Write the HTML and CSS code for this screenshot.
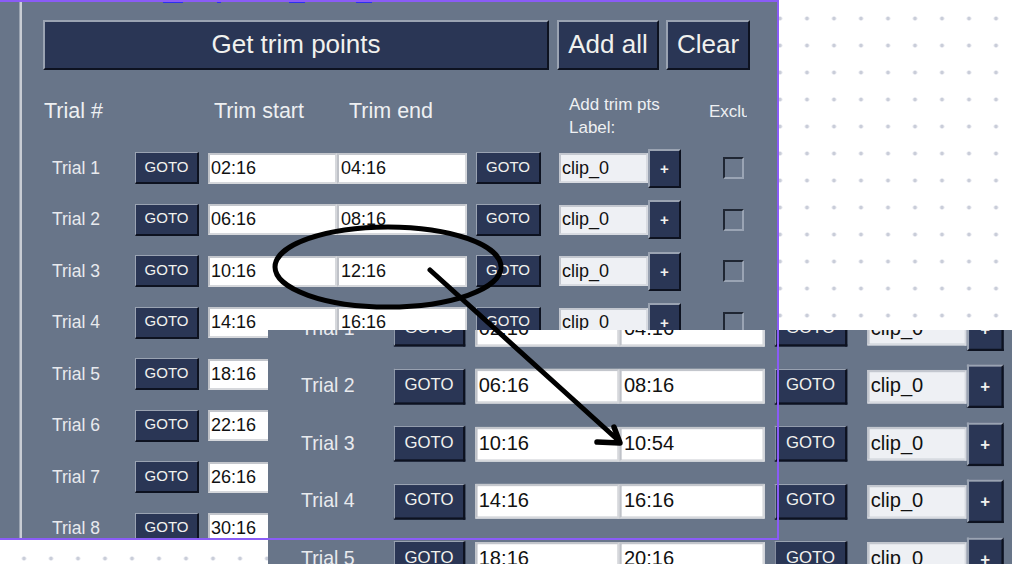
FILE: index.html
```html
<!DOCTYPE html>
<html>
<head>
<meta charset="utf-8">
<link rel="stylesheet" href="styles.css">
</head>
<body>
<div class="stage">
  <div class="panel">
    <div class="strip"></div>
    <div class="vline"></div>
    <div class="content">
      <div class="links"><i class="l1"></i><i class="l2"></i><i class="l3"></i><i class="l4"></i></div>
      <div class="toolbar">
        <span class="btn big main">Get trim points</span>
        <span class="btn big addall">Add all</span>
        <span class="btn big clear">Clear</span>
      </div>
      <div class="head">
        <span class="h-big">Trial #</span>
        <span class="h-big">Trim start</span>
        <span class="h-big">Trim end</span>
        <span class="h-small">Add trim pts<br>Label:</span>
        <span class="h-small excl">Exclude</span>
      </div>
      <div class="row"><span class="trial">Trial 1</span><span class="btn goto">GOTO</span><span class="field start">02:16</span><span class="field end">04:16</span><span class="btn goto goto2">GOTO</span><span class="field clip">clip_0</span><span class="btn plus">+</span><span class="check"></span></div>
      <div class="row"><span class="trial">Trial 2</span><span class="btn goto">GOTO</span><span class="field start">06:16</span><span class="field end">08:16</span><span class="btn goto goto2">GOTO</span><span class="field clip">clip_0</span><span class="btn plus">+</span><span class="check"></span></div>
      <div class="row"><span class="trial">Trial 3</span><span class="btn goto">GOTO</span><span class="field start">10:16</span><span class="field end">12:16</span><span class="btn goto goto2">GOTO</span><span class="field clip">clip_0</span><span class="btn plus">+</span><span class="check"></span></div>
      <div class="row"><span class="trial">Trial 4</span><span class="btn goto">GOTO</span><span class="field start">14:16</span><span class="field end">16:16</span><span class="btn goto goto2">GOTO</span><span class="field clip">clip_0</span><span class="btn plus">+</span><span class="check"></span></div>
      <div class="row"><span class="trial">Trial 5</span><span class="btn goto">GOTO</span><span class="field start">18:16</span><span class="field end">20:16</span><span class="btn goto goto2">GOTO</span><span class="field clip">clip_0</span><span class="btn plus">+</span><span class="check"></span></div>
      <div class="row"><span class="trial">Trial 6</span><span class="btn goto">GOTO</span><span class="field start">22:16</span><span class="field end">24:16</span><span class="btn goto goto2">GOTO</span><span class="field clip">clip_0</span><span class="btn plus">+</span><span class="check"></span></div>
      <div class="row"><span class="trial">Trial 7</span><span class="btn goto">GOTO</span><span class="field start">26:16</span><span class="field end">28:16</span><span class="btn goto goto2">GOTO</span><span class="field clip">clip_0</span><span class="btn plus">+</span><span class="check"></span></div>
      <div class="row"><span class="trial">Trial 8</span><span class="btn goto">GOTO</span><span class="field start">30:16</span><span class="field end">32:16</span><span class="btn goto goto2">GOTO</span><span class="field clip">clip_0</span><span class="btn plus">+</span><span class="check"></span></div>
    </div>
  </div>

  <div class="zoom">
    <div class="panel scaled">
      <div class="strip"></div>
      <div class="vline"></div>
      <div class="content">
        <div class="links"></div>
        <div class="toolbar"></div>
        <div class="head"></div>
        <div class="row"><span class="trial">Trial 1</span><span class="btn goto">GOTO</span><span class="field start">02:16</span><span class="field end">04:16</span><span class="btn goto goto2">GOTO</span><span class="field clip">clip_0</span><span class="btn plus">+</span><span class="check"></span></div>
        <div class="row"><span class="trial">Trial 2</span><span class="btn goto">GOTO</span><span class="field start">06:16</span><span class="field end">08:16</span><span class="btn goto goto2">GOTO</span><span class="field clip">clip_0</span><span class="btn plus">+</span><span class="check"></span></div>
        <div class="row"><span class="trial">Trial 3</span><span class="btn goto">GOTO</span><span class="field start">10:16</span><span class="field end">10:54</span><span class="btn goto goto2">GOTO</span><span class="field clip">clip_0</span><span class="btn plus">+</span><span class="check"></span></div>
        <div class="row"><span class="trial">Trial 4</span><span class="btn goto">GOTO</span><span class="field start">14:16</span><span class="field end">16:16</span><span class="btn goto goto2">GOTO</span><span class="field clip">clip_0</span><span class="btn plus">+</span><span class="check"></span></div>
        <div class="row"><span class="trial">Trial 5</span><span class="btn goto">GOTO</span><span class="field start">18:16</span><span class="field end">20:16</span><span class="btn goto goto2">GOTO</span><span class="field clip">clip_0</span><span class="btn plus">+</span><span class="check"></span></div>
      </div>
    </div>
  </div>

  <div class="frame"></div>

  <svg class="annot" width="1012" height="564" viewBox="0 0 1012 564">
    <ellipse cx="388" cy="267" rx="113" ry="40" fill="none" stroke="#000" stroke-width="5"/>
    <path d="M430 270 L619 441" fill="none" stroke="#000" stroke-width="5" stroke-linecap="round"/>
    <path d="M597 442 L620 443 L614 427" fill="none" stroke="#000" stroke-width="5.5" stroke-linecap="round" stroke-linejoin="round"/>
  </svg>
</div>
</body>
</html>
```

FILE: styles.css
```css
* { box-sizing: border-box; }

html, body {
  margin: 0;
  padding: 0;
}

body {
  width: 1012px;
  height: 564px;
  overflow: hidden;
  background-color: #ffffff;
  background-image: radial-gradient(circle, #c9cdd9 0, #c9cdd9 1.6px, rgba(255,255,255,0) 2.4px);
  background-size: 27px 27px;
  background-position: 10.5px 5px;
  font-family: "Liberation Sans", Arial, sans-serif;
}

.stage {
  position: relative;
  width: 1012px;
  height: 564px;
}

.panel {
  width: 777px;
  height: 538px;
  background: #687589;
  display: flex;
  overflow: hidden;
}

.strip {
  width: 19px;
  flex: none;
}

.vline {
  width: 3px;
  flex: none;
  background: #c9cdd4;
  border-left: 1px solid #9aa3b1;
}

.content {
  flex: 1;
  display: flex;
  flex-direction: column;
}

.content > * {
  flex: none;
}

.links {
  height: 3px;
  display: flex;
  align-items: flex-end;
}

.links i {
  display: block;
  height: 2px;
  background: #2b30f0;
}

.links .l1 { margin-left: 141px; width: 20px; }
.links .l2 { margin-left: 34px; width: 4px; }
.links .l3 { margin-left: 68px; width: 16px; }
.links .l4 { margin-left: 51px; width: 16px; }

.btn {
  display: flex;
  align-items: center;
  justify-content: center;
  background: #2a3655;
  color: #f1f1ee;
  border: 2px solid;
  border-color: #9aa3b2 #0d1220 #0d1220 #9aa3b2;
  flex: none;
  white-space: nowrap;
}

.toolbar {
  display: flex;
  height: 50px;
  margin-top: 17px;
  padding-left: 21px;
}

.big {
  height: 50px;
  font-size: 26px;
  padding-bottom: 2px;
}

.main { width: 506px; }
.addall { width: 102px; margin-left: 8px; }
.clear { width: 84px; margin-left: 7px; }

.head {
  height: 72.25px;
  display: grid;
  grid-template-columns: 170px 135px 220px 140px 38px;
  align-items: center;
  padding-left: 22px;
  color: #eef0f2;
}

.h-big {
  font-size: 21.5px;
  margin-top: 10px;
}

.h-small {
  font-size: 17px;
  line-height: 23px;
  margin-top: 19px;
}

.excl {
  overflow: hidden;
  white-space: nowrap;
  margin-top: 10px;
}

.row {
  height: 51.5px;
  display: flex;
  align-items: center;
  padding-left: 30px;
}

.trial {
  width: 83px;
  flex: none;
  color: #e8eaee;
  font-size: 17.5px;
}

.goto {
  width: 64px;
  height: 32px;
  font-size: 15px;
  border-width: 1px 2px 2px 1px;
  padding-bottom: 3px;
}

.goto2 {
  width: 65px;
  margin-left: 9px;
  margin-right: 18px;
}

.row > .goto:not(.goto2) {
  margin-right: 9px;
}

.field {
  flex: none;
  height: 31px;
  background: #ffffff;
  border: 2px solid #d6d8dc;
  border-top-color: #c3c6cc;
  border-left-color: #bfc2c8;
  color: #111111;
  font-size: 18px;
  display: flex;
  align-items: center;
  padding-left: 1px;
  white-space: nowrap;
  overflow: hidden;
}

.start { width: 129px; }
.end { width: 130px; padding-left: 2px; }

.clip {
  width: 89px;
  height: 30px;
  background: #eef0f4;
  border-color: #d8dbe1;
  border-left-color: #c3c7cf;
  border-top-color: #c3c7cf;
}

.plus {
  width: 33px;
  height: 39px;
  font-size: 15px;
  font-weight: bold;
}

.check {
  flex: none;
  width: 21px;
  height: 22px;
  margin-left: 42px;
  border: 2px solid;
  border-color: #1f2633 #9aa4b4 #9aa4b4 #1f2633;
  background: #6b788c;
}

.zoom {
  position: absolute;
  left: 268px;
  top: 330px;
  width: 744px;
  height: 234px;
  overflow: hidden;
  background: #687589;
}

.scaled {
  transform: translate(-25px, -189px) scale(1.117);
  transform-origin: 0 0;
}

.frame {
  position: absolute;
  left: -2px;
  top: 0;
  width: 781px;
  height: 540px;
  border: 2px solid #8a5cf6;
  pointer-events: none;
}

.annot {
  position: absolute;
  left: 0;
  top: 0;
  pointer-events: none;
}
```
